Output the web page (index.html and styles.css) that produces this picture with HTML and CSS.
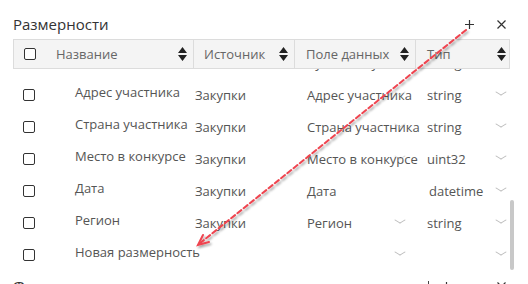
FILE: index.html
```html
<!DOCTYPE html>
<html lang="ru">
<head>
    <meta charset="UTF-8">
    <title>Размерности</title>
    <link rel="stylesheet" href="styles.css">
</head>
<body>
    <div class="panel">
        <!-- Dimensions -->
        <div class="section-head">
            <span class="section-title">Размерности</span>
            <span class="head-actions">
                <svg class="icon-plus" width="9" height="9" viewBox="0 0 9 9"><path d="M4.5 0v9M0 4.5h9"/></svg>
                <svg class="icon-close" width="9" height="9" viewBox="0 0 9 9"><path d="M0.5 0.5l8 8M8.5 0.5l-8 8"/></svg>
            </span>
        </div>

        <div class="grid-wrap">
            <div class="grid-head">
                <div class="cell cell-check"><span class="checkbox"></span></div>
                <div class="cell hcell hcell-name">Название<svg class="sort" viewBox="0 0 9 14"><path d="M0 6L4.5 0L9 6ZM0 8L4.5 14L9 8Z"/></svg></div>
                <div class="cell hcell hcell-src">Источник<svg class="sort" viewBox="0 0 9 14"><path d="M0 6L4.5 0L9 6ZM0 8L4.5 14L9 8Z"/></svg></div>
                <div class="cell hcell hcell-field">Поле данных<svg class="sort" viewBox="0 0 9 14"><path d="M0 6L4.5 0L9 6ZM0 8L4.5 14L9 8Z"/></svg></div>
                <div class="cell hcell hcell-type">Тип<svg class="sort" viewBox="0 0 9 14"><path d="M0 6L4.5 0L9 6ZM0 8L4.5 14L9 8Z"/></svg></div>
            </div>

            <div class="grid-body">
                <div class="rows">
                    <!-- row scrolled mostly out of view -->
                    <div class="row">
                        <div class="cell cell-check"></div>
                        <div class="cell cell-name"></div>
                        <div class="cell cell-src"></div>
                        <div class="cell cell-field"><span class="val">Сумма закупки</span></div>
                        <div class="cell cell-type"><span class="val">string</span></div>
                    </div>
                    <div class="row">
                        <div class="cell cell-check"><span class="checkbox"></span></div>
                        <div class="cell cell-name">Адрес участника</div>
                        <div class="cell cell-src">Закупки</div>
                        <div class="cell cell-field"><span class="val">Адрес участника</span><span class="chev faint"></span></div>
                        <div class="cell cell-type"><span class="val">string</span><span class="chev"></span></div>
                    </div>
                    <div class="row">
                        <div class="cell cell-check"><span class="checkbox"></span></div>
                        <div class="cell cell-name">Страна участника</div>
                        <div class="cell cell-src">Закупки</div>
                        <div class="cell cell-field"><span class="val">Страна участника</span><span class="chev faint"></span></div>
                        <div class="cell cell-type"><span class="val">string</span><span class="chev"></span></div>
                    </div>
                    <div class="row">
                        <div class="cell cell-check"><span class="checkbox"></span></div>
                        <div class="cell cell-name">Место в конкурсе</div>
                        <div class="cell cell-src">Закупки</div>
                        <div class="cell cell-field"><span class="val">Место в конкурсе</span><span class="chev faint"></span></div>
                        <div class="cell cell-type"><span class="val">uint32</span><span class="chev"></span></div>
                    </div>
                    <div class="row">
                        <div class="cell cell-check"><span class="checkbox"></span></div>
                        <div class="cell cell-name">Дата</div>
                        <div class="cell cell-src">Закупки</div>
                        <div class="cell cell-field"><span class="val">Дата</span></div>
                        <div class="cell cell-type"><span class="val val-wide">datetime</span><span class="chev"></span></div>
                    </div>
                    <div class="row">
                        <div class="cell cell-check"><span class="checkbox"></span></div>
                        <div class="cell cell-name">Регион</div>
                        <div class="cell cell-src">Закупки</div>
                        <div class="cell cell-field"><span class="val">Регион</span><span class="chev"></span></div>
                        <div class="cell cell-type"><span class="val">string</span><span class="chev"></span></div>
                    </div>
                    <div class="row">
                        <div class="cell cell-check"><span class="checkbox"></span></div>
                        <div class="cell cell-name">Новая размерность</div>
                        <div class="cell cell-src"></div>
                        <div class="cell cell-field"><span class="val"></span><span class="chev"></span></div>
                        <div class="cell cell-type"><span class="val"></span><span class="chev"></span></div>
                    </div>
                </div>
                <div class="scrollbar"></div>
            </div>
        </div>

        <!-- Facts -->
        <div class="section-head section-next">
            <span class="section-title">Факты</span>
            <span class="head-actions">
                <span class="tick"></span>
                <svg class="icon-plus" width="9" height="9" viewBox="0 0 9 9"><path d="M4.5 0v9M0 4.5h9"/></svg>
                <svg class="icon-close" width="9" height="9" viewBox="0 0 9 9"><path d="M0.5 0.5l8 8M8.5 0.5l-8 8"/></svg>
            </span>
        </div>
    </div>

    <!-- annotation arrow drawn over the screenshot -->
    <svg class="annotation" width="528" height="284" viewBox="0 0 528 284">
        <defs>
            <filter id="shade" x="-10%" y="-10%" width="130%" height="130%">
                <feDropShadow dx="1.5" dy="2" stdDeviation="1.2" flood-color="#000" flood-opacity="0.35"/>
            </filter>
        </defs>
        <g filter="url(#shade)" stroke="#ef4450" stroke-width="2" fill="none" stroke-linecap="round">
            <path d="M466 30L199 244" stroke-dasharray="5 3"/>
            <path d="M209 242L198 245L203 235"/>
        </g>
    </svg>
</body>
</html>
```

FILE: styles.css
```css
:root {
    --text: #555;
    --title: #333;
    --head-bg: #f4f4f4;
    --line: #dcdcdc;
    --chev: #b9b9b9;
}

* {
    margin: 0;
    padding: 0;
    box-sizing: border-box;
}

body {
    font-family: 'Open Sans', 'Liberation Sans', sans-serif;
    font-size: 13px;
    color: var(--text);
    background: white;
    width: 528px;
    height: 284px;
    overflow: hidden;
    position: relative;
}

.panel {
    padding: 14px 0 0 13px;
}

/* Section header */
.section-head {
    display: flex;
    align-items: center;
    height: 20px;
    width: 497px;
    margin-bottom: 5px;
}

.section-next {
    margin-top: 4px;
}

.section-title {
    font-size: 15px;
    line-height: 20px;
    color: var(--title);
}

.head-actions {
    margin-left: auto;
    display: flex;
    align-items: center;
    gap: 23px;
    padding-right: 4px;
}

.head-actions svg {
    stroke: #333;
    stroke-width: 1.2;
    display: block;
}

.section-next .head-actions {
    gap: 0;
}

.section-next .icon-plus {
    margin-left: 13px;
    margin-right: 46px;
}

.tick {
    width: 1px;
    height: 10px;
    background: #444;
}

/* Grid */
.grid-wrap {
    width: 502px;
}

.grid-head,
.row {
    display: grid;
    grid-template-columns: 31px 148px 101px 121px 94px;
}

.grid-head {
    width: 497px;
    height: 30px;
    background: var(--head-bg);
    border: 1px solid var(--line);
}

.cell {
    display: flex;
    align-items: center;
    white-space: nowrap;
    min-width: 0;
}

.cell-check {
    justify-content: center;
}

.checkbox {
    width: 12px;
    height: 12px;
    border: 1.5px solid #333;
    border-radius: 2px;
    background: white;
}

.hcell {
    color: #666;
    padding-right: 6px;
}

.hcell-name { padding-left: 11px; }
.hcell-src { padding-left: 10px; }
.hcell-field { padding-left: 11px; }
.hcell-type { padding-left: 11px; padding-right: 3px; }

.hcell-src,
.hcell-field,
.hcell-type {
    border-left: 1px solid var(--line);
}

.sort {
    margin-left: auto;
    width: 9px;
    height: 14px;
    fill: #222;
}

/* Body */
.grid-body {
    height: 203px;
    overflow: hidden;
    position: relative;
}

.rows {
    margin-top: -22px;
    width: 497px;
}

.row {
    height: 32px;
}

.cell-name {
    padding-left: 31px;
    padding-bottom: 6px;
    overflow: visible;
}

.cell-src {
    padding-left: 3px;
}

.cell-field {
    padding-left: 14px;
    padding-right: 10px;
}

.cell-type {
    padding-left: 13px;
    padding-right: 3px;
}

.val {
    flex: 1;
    min-width: 0;
    overflow: visible;
}

.val-wide {
    padding-left: 2px;
}

.chev {
    flex: none;
    width: 8px;
    height: 8px;
    border-right: 1px solid var(--chev);
    border-bottom: 1px solid var(--chev);
    transform: translateY(-3px) scaleY(0.6) rotate(45deg);
}

.chev.faint {
    opacity: 0.6;
}

.scrollbar {
    position: absolute;
    right: 1px;
    top: 131px;
    width: 4px;
    height: 70px;
    background: #c8c8c8;
    border-radius: 2px;
}

/* Annotation */
.annotation {
    position: absolute;
    left: 0;
    top: 0;
    pointer-events: none;
}
```
